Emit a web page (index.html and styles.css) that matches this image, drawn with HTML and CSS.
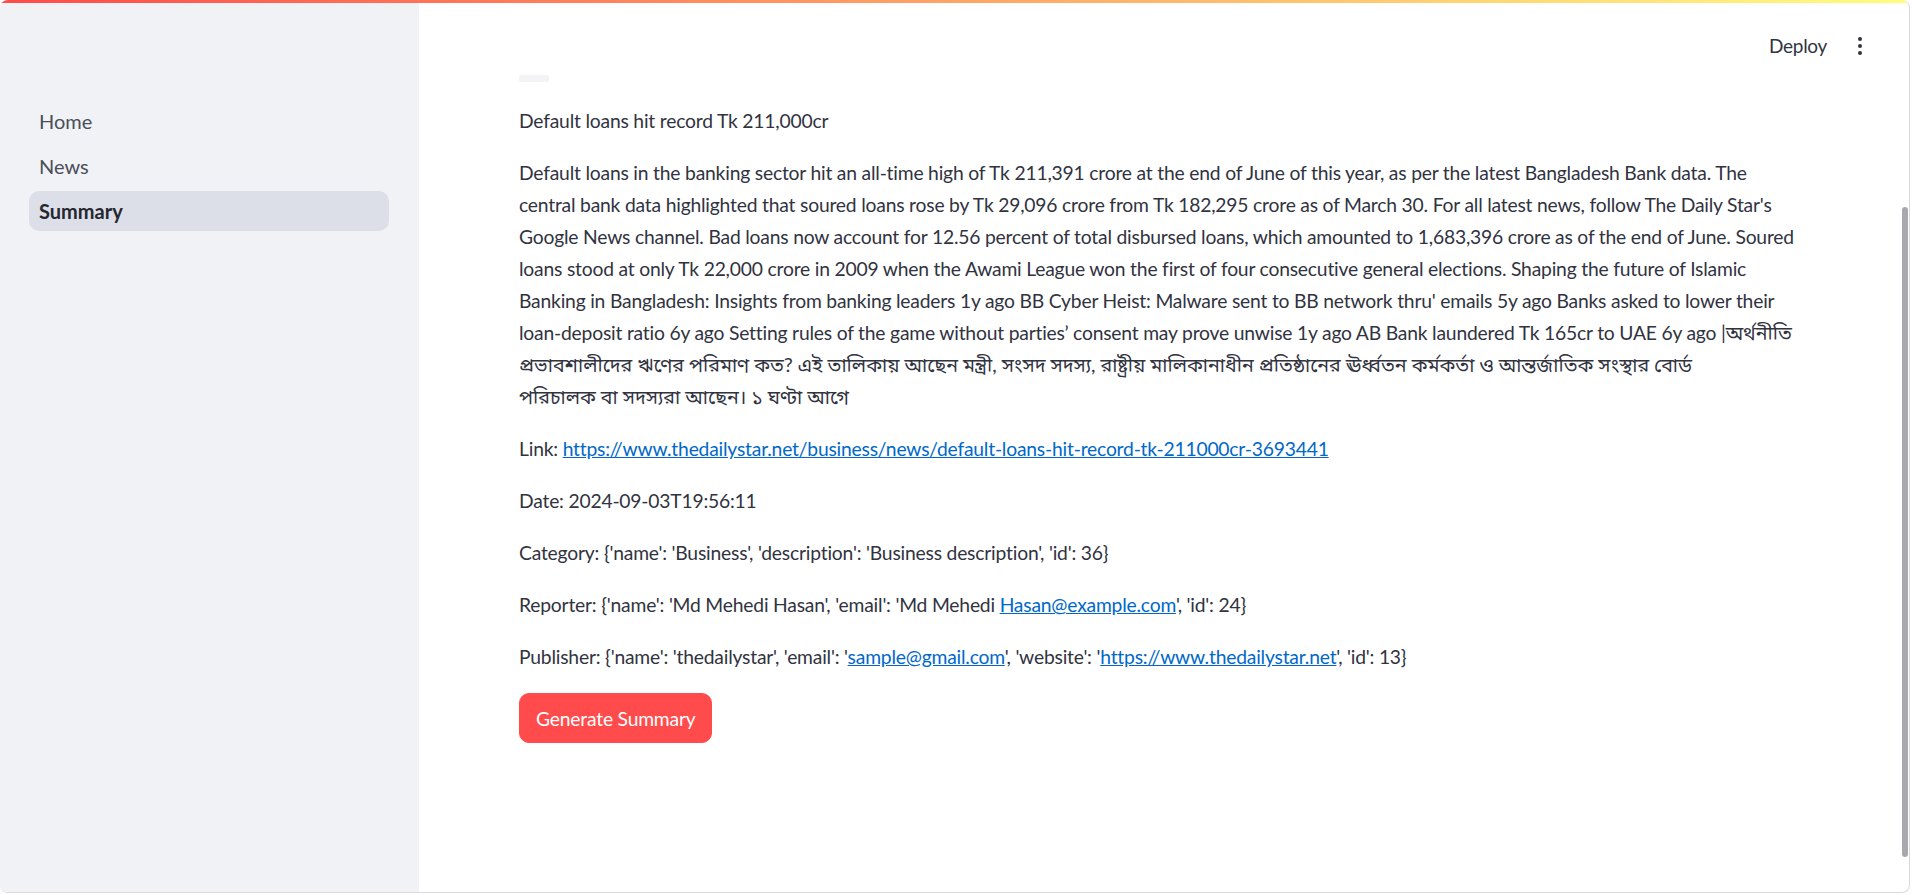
FILE: index.html
```html
<!DOCTYPE html>
<html lang="en">
<head>
<meta charset="utf-8">
<title>Summary</title>
<link rel="stylesheet" href="styles.css">
</head>
<body>
<div class="app">
  <div class="decoration"></div>
  <aside class="sidebar">
    <nav class="nav">
      <a class="nav-item">Home</a>
      <a class="nav-item">News</a>
      <a class="nav-item active">Summary</a>
    </nav>
  </aside>
  <main class="main">
    <header class="header">
      <span class="deploy">Deploy</span>
      <span class="kebab"><i></i><i></i><i></i></span>
    </header>
    <section class="content">
      <div class="placeholder"></div>
      <p>Default loans hit record Tk 211,000cr</p>
      <p>Default loans in the banking sector hit an all-time high of Tk 211,391 crore at the end of June of this year, as per the latest Bangladesh Bank data. The<br>central bank data highlighted that soured loans rose by Tk 29,096 crore from Tk 182,295 crore as of March 30. For all latest news, follow The Daily Star's<br>Google News channel. Bad loans now account for 12.56 percent of total disbursed loans, which amounted to 1,683,396 crore as of the end of June. Soured<br>loans stood at only Tk 22,000 crore in 2009 when the Awami League won the first of four consecutive general elections. Shaping the future of Islamic<br>Banking in Bangladesh: Insights from banking leaders 1y ago BB Cyber Heist: Malware sent to BB network thru' emails 5y ago Banks asked to lower their<br>loan-deposit ratio 6y ago Setting rules of the game without parties’ consent may prove unwise 1y ago AB Bank laundered Tk 165cr to UAE 6y ago |<span class="bn">অর্থনীতি</span><br><span class="bn">প্রভাবশালীদের ঋণের পরিমাণ কত? এই তালিকায় আছেন মন্ত্রী, সংসদ সদস্য, রাষ্ট্রীয় মালিকানাধীন প্রতিষ্ঠানের ঊর্ধ্বতন কর্মকর্তা ও আন্তর্জাতিক সংস্থার বোর্ড</span><br><span class="bn">পরিচালক বা সদস্যরা আছেন। ১ ঘণ্টা আগে</span></p>
      <p>Link: <a href="#">https://www.thedailystar.net/business/news/default-loans-hit-record-tk-211000cr-3693441</a></p>
      <p>Date: 2024-09-03T19:56:11</p>
      <p>Category: {'name': 'Business', 'description': 'Business description', 'id': 36}</p>
      <p>Reporter: {'name': 'Md Mehedi Hasan', 'email': 'Md Mehedi <a href="#">Hasan@example.com</a>', 'id': 24}</p>
      <p>Publisher: {'name': 'thedailystar', 'email': '<a href="#">sample@gmail.com</a>', 'website': '<a href="#">https://www.thedailystar.net</a>', 'id': 13}</p>
      <button class="btn">Generate Summary</button>
    </section>
    <div class="scroll-thumb"></div>
  </main>
</div>
</body>
</html>
```

FILE: styles.css
```css
html, body {
  margin: 0;
  padding: 0;
  background: #ffffff;
}
body {
  font-family: "Source Sans Pro", Lato, "Noto Sans", "Noto Sans Bengali", sans-serif;
  color: #31333f;
  font-size: 20px;
  line-height: 32px;
}
.app {
  position: relative;
  display: flex;
  width: 1909px;
  height: 892px;
  border-right: 1px solid #d9d9dc;
  border-bottom: 1px solid #d9d9dc;
  border-radius: 8px;
  overflow: hidden;
  box-sizing: content-box;
}
.decoration {
  position: absolute;
  top: 0;
  left: 0;
  right: 0;
  height: 3px;
  background: linear-gradient(90deg, #ff4b4b, #fffd80);
  z-index: 5;
}
.sidebar {
  width: 419px;
  flex: none;
  background: #f0f2f6;
}
.nav {
  display: flex;
  flex-direction: column;
  gap: 5px;
  padding: 101px 30px 0 29px;
}
.nav-item {
  display: block;
  height: 40px;
  line-height: 40px;
  padding-left: 10px;
  border-radius: 10px;
  color: #4b4d58;
  font-size: 20px;
}
.nav-item.active {
  background: #dcdfe8;
  color: #262730;
  font-weight: 700;
}
.main {
  position: relative;
  flex: 1;
  display: flex;
  flex-direction: column;
}
.header {
  height: 64px;
  box-sizing: border-box;
  padding: 28px 41px 0 0;
  display: flex;
  justify-content: flex-end;
  align-items: flex-start;
  gap: 25px;
}
.deploy {
  height: 36px;
  line-height: 36px;
  font-size: 19px;
  letter-spacing: -0.3px;
  color: #31333f;
}
.kebab {
  width: 16px;
  height: 36px;
  display: flex;
  flex-direction: column;
  align-items: center;
  justify-content: center;
  gap: 3px;
}
.kebab i {
  display: block;
  width: 4px;
  height: 4px;
  border-radius: 50%;
  background: #31333f;
}
.content {
  padding: 11px 60px 0 100px;
  font-size: 19.3px;
  letter-spacing: -0.2px;
}
.placeholder {
  width: 30px;
  height: 7px;
  background: #f3f3f5;
  border-radius: 2px;
  margin-bottom: 23px;
}
.content p {
  margin: 0 0 20px 0;
  white-space: nowrap;
}
.bn {
  font-size: 19.6px;
  line-height: 1;
  letter-spacing: 0;
}
.content a {
  color: #0068c9;
  text-decoration: underline;
}
.btn {
  height: 50px;
  min-width: 193px;
  padding: 0 16px;
  border: 1px solid #ff4b4b;
  background: #ff4b4b;
  color: #ffffff;
  border-radius: 10px;
  font-family: inherit;
  font-size: 19.3px;
  letter-spacing: -0.2px;
}
.scroll-thumb {
  position: absolute;
  right: 1px;
  top: 207px;
  width: 6px;
  height: 650px;
  border-radius: 3px;
  background: #a9a9ad;
}
```
